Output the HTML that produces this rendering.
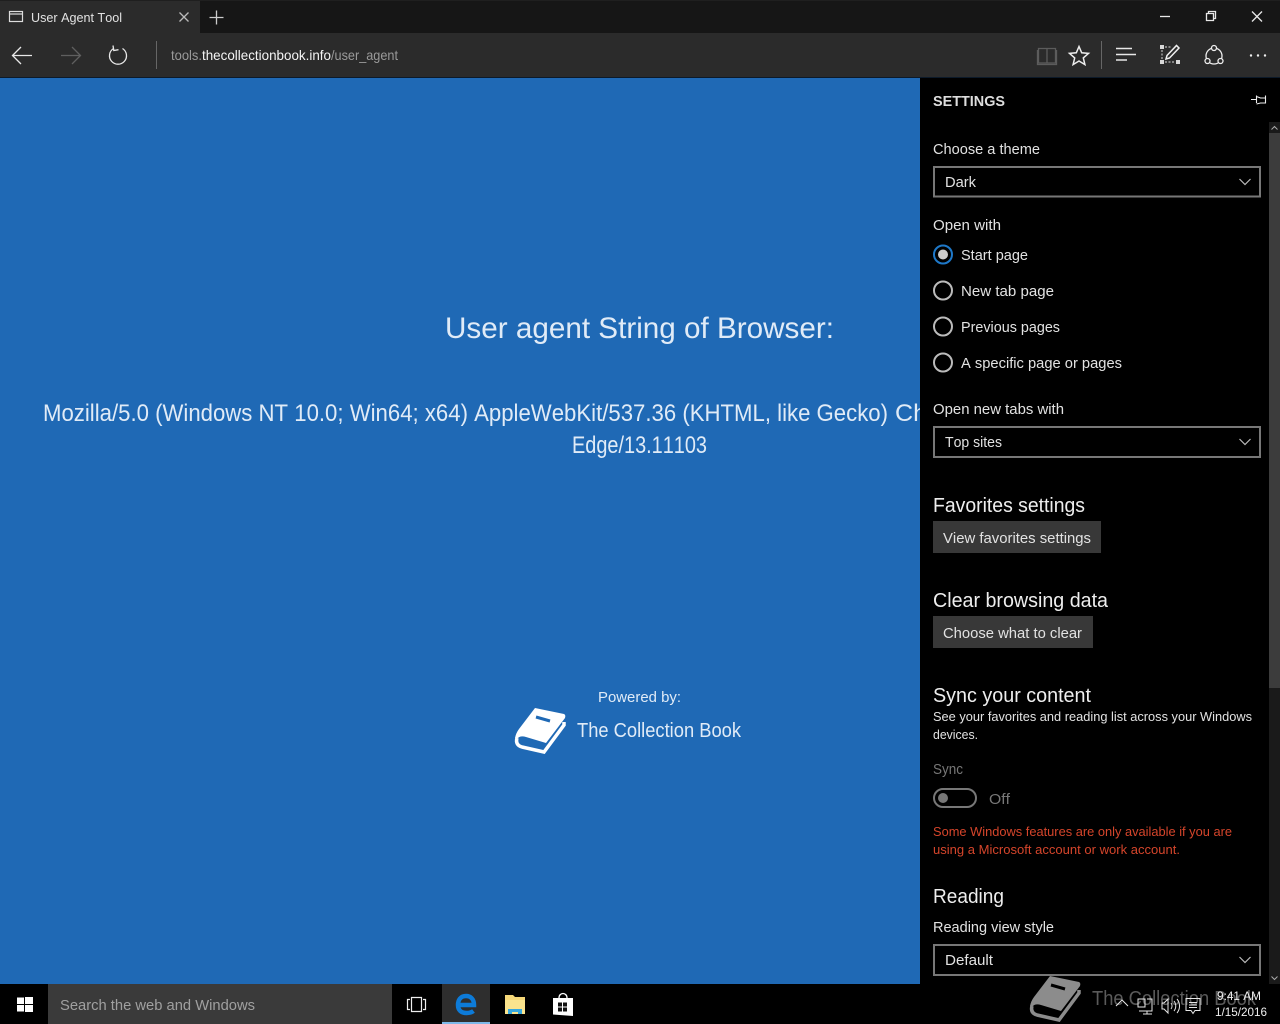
<!DOCTYPE html>
<html lang="en">
<head>
<meta charset="utf-8">
<title>User Agent Tool</title>
<style>
html,body{margin:0;padding:0;background:#000;width:1280px;height:1024px;overflow:hidden}
svg{display:block}
text{font-family:"Liberation Sans",sans-serif;fill:#e2e2e2;font-size:15px;font-kerning:none}
.h{font-size:20px;fill:#eeeeee}
.s{font-size:13px}
.m{fill:#e0ebf7}
.ln{fill:none;stroke:#e8e8e8;stroke-width:1.3}
</style>
</head>
<body>
<svg xmlns="http://www.w3.org/2000/svg" width="1280" height="1024" viewBox="0 0 1280 1024">
<!-- chrome -->
<rect width="1280" height="33" fill="#161616"/>
<rect width="200" height="33" y="0" fill="#2b2b2b"/>
<rect y="0" width="1280" height="1" fill="#1f1f1f"/>
<rect y="33" width="1280" height="44" fill="#2b2b2b"/>
<rect y="77" width="1280" height="1" fill="#0c1a2a"/>
<!-- tab -->
<rect x="9.500" y="11.500" width="13" height="10" fill="none" stroke="#ddd" stroke-width="1.200"/>
<line x1="9" y1="14" x2="23" y2="14" stroke="#ddd" stroke-width="1.200"/>
<text x="31" y="22" style="font-size:13px" textLength="91" lengthAdjust="spacingAndGlyphs">User Agent Tool</text>
<path d="M179.500 12.500l9 9m0-9l-9 9" class="ln" style="stroke:#bbb"/>
<path d="M216.500 10.500v14M209.500 17.500h14" class="ln" style="stroke:#ccc"/>
<!-- window controls -->
<path d="M1160 16.500h10" class="ln"/>
<path d="M1206.500 13.500h7v7h-7zM1208.500 13.500v-2h7v7h-2" class="ln"/>
<path d="M1252 11.500l10 10m0-10l-10 10" class="ln"/>
<!-- nav -->
<path d="M13 55.500h19M21 47l-8.500 8.500 8.500 8.500" class="ln"/>
<path d="M61 55.500h19M72 47l8.500 8.500-8.500 8.500" class="ln" style="stroke:#5f5f5f"/>
<path d="M113.500 48.500A8.500 8.500 0 1 0 122.500 48.500M113 45.500l.8 5 4.700-.8" class="ln"/>
<rect x="156" y="41" width="1" height="28" fill="#666"/>
<text x="171" y="60" style="fill:#9a9a9a;font-size:14px" textLength="31" lengthAdjust="spacingAndGlyphs">tools.</text>
<text x="202" y="60" style="fill:#f4f4f4;font-size:14px" textLength="129" lengthAdjust="spacingAndGlyphs">thecollectionbook.info</text>
<text x="331" y="60" style="fill:#9a9a9a;font-size:14px" textLength="67" lengthAdjust="spacingAndGlyphs">/user_agent</text>
<!-- toolbar right -->
<path d="M1047 48.500h-8.500v14.500h8.500zM1047 48.500h8.500v14.500h-8.500zM1037.500 50v14.500h19V50" fill="none" stroke="#5c5c5c" stroke-width="1.300"/>
<path d="M1079 46.500l2.700 6.300 6.800.6-5.200 4.500 1.600 6.700-5.900-3.600-5.900 3.600 1.600-6.700-5.200-4.500 6.800-.6z" fill="none" stroke="#eee" stroke-width="1.500"/>
<rect x="1101" y="41" width="1" height="28" fill="#666"/>
<path d="M1116 48.500h16M1116 54.500h20M1116 60h11" class="ln" style="stroke-width:1.500"/>
<g fill="#d8d8d8">
<rect x="1160" y="45" width="4" height="4"/><rect x="1176" y="60" width="4" height="4"/><rect x="1160" y="60" width="4" height="4"/>
</g>
<path d="M1162 50v10M1165 47h6M1165 62h10" fill="none" stroke="#bbb" stroke-width="1.200" stroke-dasharray="2 1.500"/>
<path d="M1166 59l1-3.500 9.500-10 2.500 2.500-9.500 10z" fill="none" stroke="#f0f0f0" stroke-width="1.500"/>
<circle cx="1214" cy="56" r="8" fill="none" stroke="#eee" stroke-width="1.300"/>
<circle cx="1214" cy="48" r="2.500" fill="#2b2b2b" stroke="#eee" stroke-width="1.300"/>
<circle cx="1207.500" cy="61" r="2.500" fill="#2b2b2b" stroke="#eee" stroke-width="1.300"/>
<circle cx="1220.500" cy="61" r="2.500" fill="#2b2b2b" stroke="#eee" stroke-width="1.300"/>
<g fill="#eee"><circle cx="1251" cy="55.500" r="1.200"/><circle cx="1258" cy="55.500" r="1.200"/><circle cx="1265" cy="55.500" r="1.200"/></g>

<!-- page -->
<rect y="78" width="920" height="906" fill="#1f69b5"/>
<text class="m" x="445" y="338" style="font-size:30px" textLength="389" lengthAdjust="spacingAndGlyphs">User agent String of Browser:</text>
<text class="m" x="43" y="421" style="font-size:24px" textLength="845" lengthAdjust="spacingAndGlyphs">Mozilla/5.0 (Windows NT 10.0; Win64; x64) AppleWebKit/537.36 (KHTML, like Gecko)</text>
<text class="m" x="895" y="421" style="font-size:24px" textLength="32" lengthAdjust="spacingAndGlyphs">Ch</text>
<text class="m" x="572" y="453" style="font-size:24px" textLength="135" lengthAdjust="spacingAndGlyphs">Edge/13.11103</text>
<text class="m" x="598" y="702" textLength="83" lengthAdjust="spacingAndGlyphs">Powered by:</text>
<text class="m" x="577" y="737" style="font-size:20px" textLength="164" lengthAdjust="spacingAndGlyphs">The Collection Book</text>
<g>
<path d="M535 708L564 714Q566 715 565 718L546 743L526 737Q520 735 517 739L515 738Q516 733 519 729Z" fill="#fff"/>
<path d="M517 738Q515 745 522 747L544 752L564 725V722" fill="none" stroke="#fff" stroke-width="3.500"/>
<path d="M536 717L550 721" stroke="#1f69b5" stroke-width="3"/>
</g>

<!-- sidebar -->
<rect x="920" y="78" width="360" height="906" fill="#000"/>
<rect x="1269" y="122" width="11" height="862" fill="#1a1a1a"/>
<rect x="1269" y="133" width="11" height="555" fill="#3c3c3c"/>
<path d="M1271.500 129.500l3-3 3 3M1271.500 976.500l3 3 3-3" fill="none" stroke="#aaa" stroke-width="1"/>
<text x="933" y="106" style="font-size:15px;font-weight:bold;fill:#ddd" textLength="72" lengthAdjust="spacingAndGlyphs">SETTINGS</text>
<path d="M1251 99.500h5.500M1256.500 95.500v7.500M1256.500 96.500l4 1.500h5v-2.500v7.500h-5l-4 1" fill="none" stroke="#eee" stroke-width="1.100"/>

<text x="933" y="154" textLength="107" lengthAdjust="spacingAndGlyphs">Choose a theme</text>
<rect x="934" y="167" width="326" height="29.500" fill="none" stroke="#777" stroke-width="2"/>
<text x="945" y="187" textLength="31" lengthAdjust="spacingAndGlyphs">Dark</text>
<path d="M1239.500 179l5.500 5.500 5.500-5.500" fill="none" stroke="#bbb" stroke-width="1.200"/>

<text x="933" y="230" textLength="68" lengthAdjust="spacingAndGlyphs">Open with</text>
<circle cx="943" cy="254.500" r="9" fill="none" stroke="#1e78c8" stroke-width="2"/>
<circle cx="943" cy="254.500" r="5" fill="#ccc"/>
<text x="961" y="260" textLength="67" lengthAdjust="spacingAndGlyphs">Start page</text>
<circle cx="943" cy="290.500" r="9" fill="none" stroke="#bbb" stroke-width="2"/>
<text x="961" y="296" textLength="93" lengthAdjust="spacingAndGlyphs">New tab page</text>
<circle cx="943" cy="326.500" r="9" fill="none" stroke="#bbb" stroke-width="2"/>
<text x="961" y="332" textLength="99" lengthAdjust="spacingAndGlyphs">Previous pages</text>
<circle cx="943" cy="362.500" r="9" fill="none" stroke="#bbb" stroke-width="2"/>
<text x="961" y="368" textLength="161" lengthAdjust="spacingAndGlyphs">A specific page or pages</text>

<text x="933" y="414" textLength="131" lengthAdjust="spacingAndGlyphs">Open new tabs with</text>
<rect x="934" y="427" width="326" height="30" fill="none" stroke="#777" stroke-width="2"/>
<text x="945" y="447" textLength="57" lengthAdjust="spacingAndGlyphs">Top sites</text>
<path d="M1239.500 439l5.500 5.500 5.500-5.500" fill="none" stroke="#bbb" stroke-width="1.200"/>

<text class="h" x="933" y="512" textLength="152" lengthAdjust="spacingAndGlyphs">Favorites settings</text>
<rect x="933" y="521" width="168" height="32" fill="#383838"/>
<text x="943" y="543" textLength="148" lengthAdjust="spacingAndGlyphs">View favorites settings</text>

<text class="h" x="933" y="607" textLength="175" lengthAdjust="spacingAndGlyphs">Clear browsing data</text>
<rect x="933" y="616" width="160" height="32" fill="#383838"/>
<text x="943" y="638" textLength="139" lengthAdjust="spacingAndGlyphs">Choose what to clear</text>

<text class="h" x="933" y="702" textLength="158" lengthAdjust="spacingAndGlyphs">Sync your content</text>
<text class="s" x="933" y="721" textLength="319" lengthAdjust="spacingAndGlyphs">See your favorites and reading list across your Windows</text>
<text class="s" x="933" y="739" textLength="45" lengthAdjust="spacingAndGlyphs">devices.</text>
<text x="933" y="774" style="fill:#777" textLength="30" lengthAdjust="spacingAndGlyphs">Sync</text>
<rect x="934" y="789" width="42" height="18" rx="9" fill="none" stroke="#777" stroke-width="2"/>
<circle cx="943" cy="798" r="5" fill="#777"/>
<text x="989" y="804" style="fill:#777" textLength="21" lengthAdjust="spacingAndGlyphs">Off</text>
<text class="s" x="933" y="836" style="fill:#d5452b" textLength="299" lengthAdjust="spacingAndGlyphs">Some Windows features are only available if you are</text>
<text class="s" x="933" y="854" style="fill:#d5452b" textLength="247" lengthAdjust="spacingAndGlyphs">using a Microsoft account or work account.</text>
<text class="h" x="933" y="903" textLength="71" lengthAdjust="spacingAndGlyphs">Reading</text>
<text x="933" y="932" textLength="121" lengthAdjust="spacingAndGlyphs">Reading view style</text>
<rect x="934" y="945" width="326" height="30" fill="none" stroke="#777" stroke-width="2"/>
<text x="945" y="965" textLength="48" lengthAdjust="spacingAndGlyphs">Default</text>
<path d="M1239.500 957l5.500 5.500 5.500-5.500" fill="none" stroke="#bbb" stroke-width="1.200"/>

<!-- taskbar -->
<rect y="984" width="1280" height="40" fill="#000"/>
<path fill="#fff" d="M17 997.500h7v6.500h-7zM25 997h8v7h-8zM17 1005h7v6.500h-7zM25 1005h8v7h-8z"/>
<rect x="48" y="984" width="344" height="40" fill="#3a3a3a"/>
<text x="60" y="1010" style="fill:#a0a0a0" textLength="195" lengthAdjust="spacingAndGlyphs">Search the web and Windows</text>
<path d="M410 999.500h-2.500v10h2.500M423 999.500h2.500v10H423M411.500 997.500h10v14h-10z" fill="none" stroke="#eee" stroke-width="1.200"/>
<rect x="442" y="984" width="48" height="40" fill="#2e2e2e"/>
<rect x="442" y="1022" width="48" height="2" fill="#7db8e8"/>
<path d="M459 1005H474C474 999 470.500 996 466 996C460.500 996 458 1000 458 1005C458 1010.500 461.500 1013 466.500 1013C469.500 1013 471.500 1012.500 473.500 1011" fill="none" stroke="#0d7bd8" stroke-width="4.500"/>
<path d="M505 995h8l2 2h10v17h-20z" fill="#f5d778"/>
<rect x="505" y="1000" width="20" height="14" fill="#fbe48e"/>
<path d="M508 1014v-5h14v5h-4v-2h-6v2z" fill="#38a9e0"/>
<path d="M553 998h20v18l-20-1.500z" fill="#fff"/>
<path d="M559 998c0-6 8-6 8 0" fill="none" stroke="#fff" stroke-width="1.300"/>
<path d="M558 1002.500h4v4h-4zM563 1002.500h4v4h-4zM558 1007.500h4v4h-4zM563 1007.500h4v4h-4z" fill="#111"/>

<!-- watermark -->
<g transform="translate(515 268)">
<path d="M535 708L564 714Q566 715 565 718L546 743L526 737Q520 735 517 739L515 738Q516 733 519 729Z" fill="#8c8c8c"/>
<path d="M517 738Q515 745 522 747L544 752L564 725V722" fill="none" stroke="#8c8c8c" stroke-width="3.500"/>
<path d="M536 717L550 721" stroke="#000" stroke-width="3"/>
</g>
<text x="1092" y="1005" style="font-size:20px;fill:#5a5a5a" textLength="164" lengthAdjust="spacingAndGlyphs">The Collection Book</text>
<!-- tray -->
<path d="M1116 1006l6-6 6 6" class="ln" style="stroke-width:1"/>
<path d="M1139 1011h13v-12h-5M1143 1014h9M1147 1011v3M1138 999h7v8h-7z" class="ln" style="stroke-width:1"/>
<path d="M1162 1003h2l4-4v14l-4-4h-2zM1171 1003a5 5 0 0 1 0 6M1174 1001a8 8 0 0 1 0 10M1177 999a11 11 0 0 1 0 14" class="ln" style="stroke-width:1"/>
<path d="M1186 998.500h14v12h-5l-2 3-2-3h-5zM1189 1002.500h8M1189 1005h8M1189 1007.500h8" class="ln" style="stroke-width:1"/>
<text x="1217" y="1000" style="font-size:12px;fill:#f0f0f0" textLength="44" lengthAdjust="spacingAndGlyphs">9:41 AM</text>
<text x="1215" y="1016" style="font-size:12px;fill:#f0f0f0" textLength="52" lengthAdjust="spacingAndGlyphs">1/15/2016</text>
</svg>
</body>
</html>
